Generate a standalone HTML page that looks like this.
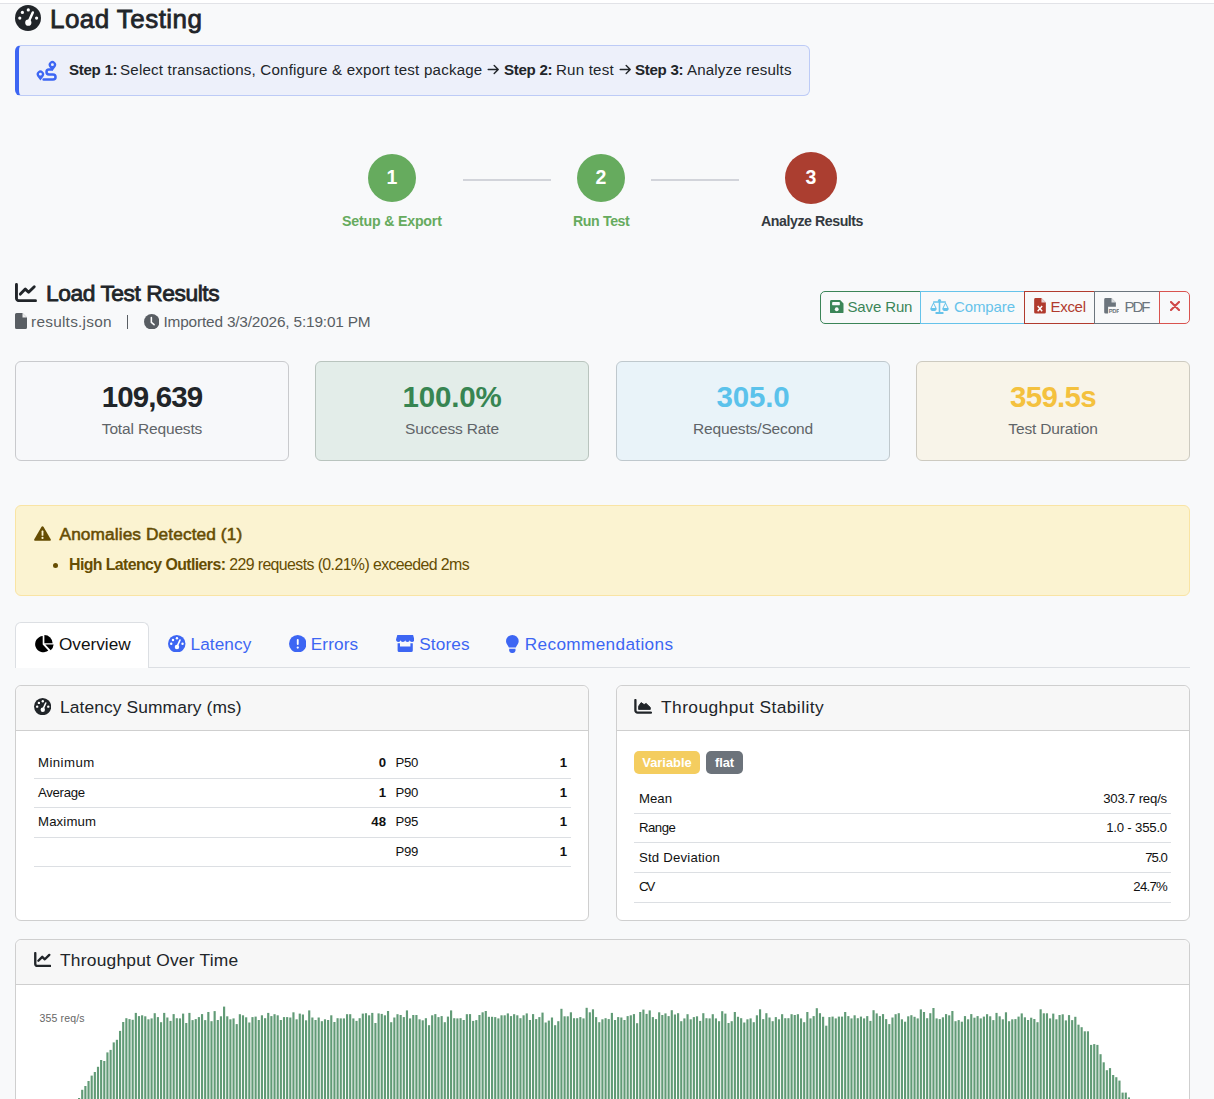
<!DOCTYPE html>
<html><head><meta charset="utf-8">
<style>
*{box-sizing:border-box;margin:0;padding:0}
html,body{width:1214px;height:1099px;overflow:hidden}
body{background:#f8f9fa;font-family:"Liberation Sans",sans-serif;color:#212529;position:relative}
.a{position:absolute}
.t{position:absolute;white-space:nowrap;line-height:1}
.box{position:absolute;border:1px solid #cfd0d3;border-radius:6px}
svg{position:absolute;display:block}
.hdr{position:absolute;left:0;right:0;top:0;height:45px;background:#f7f7f7;border-bottom:1px solid #cfcfcf;border-radius:6px 6px 0 0}
.row{position:absolute;height:1px;background:#dcdfe3}
</style></head><body>
<!-- top strip -->
<div class="a" style="left:0;top:0;width:1214px;height:3px;background:#fff"></div>
<div class="a" style="left:0;top:3px;width:1214px;height:1px;background:#e2e3e7"></div>

<!-- Title -->
<svg style="left:15px;top:5px" width="26" height="26" viewBox="0 0 26 26">
<circle cx="13" cy="13" r="13" fill="#212529"/>
<circle cx="13.3" cy="4.9" r="1.6" fill="#fff"/><circle cx="7.4" cy="7.4" r="1.6" fill="#fff"/>
<circle cx="4.8" cy="13.1" r="1.6" fill="#fff"/><circle cx="21.6" cy="13.1" r="1.6" fill="#fff"/>
<line x1="13.3" y1="17.5" x2="17.8" y2="7.5" stroke="#fff" stroke-width="2.5" stroke-linecap="round"/>
<circle cx="13.3" cy="17.7" r="3.1" fill="#fff"/>
</svg>
<div class="t" style="left:50px;top:6px;font-size:26px;letter-spacing:0.45px;-webkit-text-stroke:0.8px #212529">Load Testing</div>

<!-- banner -->
<div class="a" style="left:15px;top:45px;width:795px;height:51px;background:#edf0fa;border:1px solid #bdcbf6;border-left:4px solid #3d66f3;border-radius:6px"></div>
<svg style="left:36px;top:60px" width="21" height="21" viewBox="0 0 21 21">
<path d="M4.4 20.4 L1.2 16.2 A3.75 3.75 0 1 1 7.6 16.2 Z M4.4 12.7 A1.45 1.45 0 1 0 4.4 15.6 A1.45 1.45 0 1 0 4.4 12.7Z" fill="#3d66f3" fill-rule="evenodd"/>
<path d="M16.4 10.9 L13.2 6.7 A3.75 3.75 0 1 1 19.6 6.7 Z M16.4 3.2 A1.45 1.45 0 1 0 16.4 6.1 A1.45 1.45 0 1 0 16.4 3.2Z" fill="#3d66f3" fill-rule="evenodd"/>
<path d="M15.5 9.6 H12.9 A2.4 2.4 0 0 0 12.9 14.4 H17 A2.55 2.55 0 0 1 17 19.5 H7.6" stroke="#3d66f3" stroke-width="2.5" fill="none" stroke-linecap="round"/>
</svg>
<div class="t" style="left:69px;top:62px;font-size:15.1px;font-weight:700;letter-spacing:-0.3px">Step 1:</div>
<div class="t" style="left:120px;top:62px;font-size:15.1px;letter-spacing:0.21px">Select transactions, Configure &amp; export test package</div>
<svg style="left:487px;top:64px" width="12" height="11" viewBox="0 0 12 11"><path d="M1.2 5.5 H10.8 M7.2 1.4 L11.2 5.5 L7.2 9.6" stroke="#212529" stroke-width="1.4" fill="none" stroke-linecap="round" stroke-linejoin="round"/></svg>
<div class="t" style="left:504px;top:62px;font-size:15.1px;font-weight:700;letter-spacing:-0.3px">Step 2:</div>
<div class="t" style="left:556px;top:62px;font-size:15.1px;letter-spacing:0.2px">Run test</div>
<svg style="left:618.5px;top:64px" width="12" height="11" viewBox="0 0 12 11"><path d="M1.2 5.5 H10.8 M7.2 1.4 L11.2 5.5 L7.2 9.6" stroke="#212529" stroke-width="1.4" fill="none" stroke-linecap="round" stroke-linejoin="round"/></svg>
<div class="t" style="left:635px;top:62px;font-size:15.1px;font-weight:700;letter-spacing:-0.3px">Step 3:</div>
<div class="t" style="left:687px;top:62px;font-size:15.1px;letter-spacing:0.15px">Analyze results</div>

<!-- stepper -->
<div class="a" style="left:368px;top:154px;width:48px;height:48px;border-radius:50%;background:#66ab5e"></div>
<div class="a" style="left:577px;top:154px;width:48px;height:48px;border-radius:50%;background:#66ab5e"></div>
<div class="a" style="left:785px;top:152px;width:52px;height:52px;border-radius:50%;background:#ab3e30"></div>
<div class="t" style="left:368px;width:48px;text-align:center;top:168px;font-size:19.5px;font-weight:700;color:#fff">1</div>
<div class="t" style="left:577px;width:48px;text-align:center;top:168px;font-size:19.5px;font-weight:700;color:#fff">2</div>
<div class="t" style="left:785px;width:52px;text-align:center;top:168px;font-size:19.5px;font-weight:700;color:#fff">3</div>
<div class="a" style="left:463px;top:179px;width:88px;height:2px;background:#d2d4da"></div>
<div class="a" style="left:651px;top:179px;width:88px;height:2px;background:#d2d4da"></div>
<div class="t" style="left:342px;top:214px;font-size:14.2px;font-weight:700;color:#66ab5e;letter-spacing:-0.2px">Setup &amp; Export</div>
<div class="t" style="left:573px;top:214px;font-size:14.2px;font-weight:700;color:#66ab5e;letter-spacing:-0.4px">Run Test</div>
<div class="t" style="left:761px;top:214px;font-size:14.2px;font-weight:700;color:#343a40;letter-spacing:-0.45px">Analyze Results</div>

<!-- results header -->
<svg style="left:15px;top:283px" width="22" height="19" viewBox="0 0 22 19">
<path d="M1.46 1.45 V15.2 A2.5 2.5 0 0 0 3.96 17.7 H20.5" stroke="#212529" stroke-width="2.9" fill="none" stroke-linecap="round"/>
<path d="M5.4 11.1 L10.3 6.1 L13.6 9.2 L19.25 3.7" stroke="#212529" stroke-width="2.9" fill="none" stroke-linejoin="round" stroke-linecap="round"/>
</svg>
<div class="t" style="left:46px;top:282px;font-size:22.8px;letter-spacing:-0.45px;-webkit-text-stroke:0.8px #212529">Load Test Results</div>
<svg style="left:15px;top:313px" width="12" height="16" viewBox="0 0 12 16">
<path d="M1.5 0 H7.5 L12 4.5 V14.5 A1.5 1.5 0 0 1 10.5 16 H1.5 A1.5 1.5 0 0 1 0 14.5 V1.5 A1.5 1.5 0 0 1 1.5 0Z" fill="#595e63"/>
<path d="M7.5 0 V4.5 H12" fill="#fff" opacity="0.9"/>
</svg>
<div class="t" style="left:31px;top:314px;font-size:15.4px;color:#595e63;letter-spacing:0.25px">results.json</div>
<div class="a" style="left:127px;top:315px;width:1.3px;height:14px;background:#595e63"></div>
<svg style="left:143.5px;top:313.5px" width="15.5" height="15.5" viewBox="0 0 16 16">
<circle cx="8" cy="8" r="8" fill="#595e63"/>
<path d="M7.6 3.6 V8.6 L10.4 11" stroke="#fff" stroke-width="1.6" fill="none" stroke-linecap="round"/>
</svg>
<div class="t" style="left:163.5px;top:314px;font-size:15.4px;color:#595e63;letter-spacing:-0.18px">Imported 3/3/2026, 5:19:01 PM</div>

<!-- button group -->
<div class="a" style="left:820px;top:291px;width:101px;height:33px;border:1px solid #3b8558;border-radius:5px 0 0 5px"></div>
<div class="a" style="left:920px;top:291px;width:105px;height:33px;border:1px solid #66c3ea"></div>
<div class="a" style="left:1024px;top:291px;width:71px;height:33px;border:1px solid #b13b2e"></div>
<div class="a" style="left:1094px;top:291px;width:66px;height:33px;border:1px solid #6c757d"></div>
<div class="a" style="left:1159px;top:291px;width:31px;height:33px;border:1px solid #d9534f;border-radius:0 5px 5px 0"></div>
<svg style="left:830px;top:299.5px" width="13.5" height="13.5" viewBox="0 0 14 14">
<path d="M1.5 0 H10.5 L14 3.5 V12.5 A1.5 1.5 0 0 1 12.5 14 H1.5 A1.5 1.5 0 0 1 0 12.5 V1.5 A1.5 1.5 0 0 1 1.5 0Z" fill="#3b8558"/>
<rect x="2.2" y="2" width="8" height="3.4" rx="0.5" fill="#f8f9fa"/>
<circle cx="7" cy="9.6" r="2" fill="#f8f9fa"/>
</svg>
<div class="t" style="left:847.5px;top:299px;font-size:15px;color:#3b8558;letter-spacing:-0.13px">Save Run</div>
<svg style="left:930px;top:299px" width="19" height="15" viewBox="0 0 19 15">
<g fill="#66c3ea">
<rect x="8.7" y="1" width="1.6" height="12"/>
<rect x="5.5" y="13" width="8" height="2" rx="0.6"/>
<rect x="3" y="2.2" width="13" height="1.6" rx="0.8"/>
<circle cx="9.5" cy="1.6" r="1.6"/>
<path d="M0.3 9.5 L3.5 3 L6.7 9.5 A3.2 2.6 0 0 1 0.3 9.5Z M1.6 9 H5.4 L3.5 5Z" fill-rule="evenodd"/>
<path d="M12.3 9.5 L15.5 3 L18.7 9.5 A3.2 2.6 0 0 1 12.3 9.5Z M13.6 9 H17.4 L15.5 5Z" fill-rule="evenodd"/>
</g>
</svg>
<div class="t" style="left:954px;top:299px;font-size:15px;color:#66c3ea;letter-spacing:-0.1px">Compare</div>
<svg style="left:1034px;top:298.3px" width="12" height="15.6" viewBox="0 0 12 16">
<path d="M1.5 0 H7.5 L12 4.5 V14.5 A1.5 1.5 0 0 1 10.5 16 H1.5 A1.5 1.5 0 0 1 0 14.5 V1.5 A1.5 1.5 0 0 1 1.5 0Z" fill="#b13b2e"/>
<path d="M7.5 0 V4.5 H12Z" fill="#f8f9fa" opacity="0.8"/>
<path d="M3.6 8.3 L8.2 13.6 M8.2 8.3 L3.6 13.6" stroke="#fff" stroke-width="1.5"/>
</svg>
<div class="t" style="left:1050.5px;top:299px;font-size:15px;color:#b13b2e;letter-spacing:-0.3px">Excel</div>
<svg style="left:1103.8px;top:298.3px" width="15" height="15.6" viewBox="0 0 15 16">
<path d="M1.5 0 H7.5 L12 4.5 V9 H4 V16 H1.5 A1.5 1.5 0 0 1 0 14.5 V1.5 A1.5 1.5 0 0 1 1.5 0Z" fill="#6c757d"/>
<path d="M7.5 0 V4.5 H12Z" fill="#f8f9fa" opacity="0.8"/>
<text x="4.6" y="15.6" font-family="Liberation Sans" font-weight="700" font-size="6" fill="#6c757d" letter-spacing="-0.3">PDF</text>
</svg>
<div class="t" style="left:1124.5px;top:299px;font-size:15px;color:#6c757d;letter-spacing:-2.1px">PDF</div>
<svg style="left:1169.5px;top:301.3px" width="10" height="10" viewBox="0 0 10 10">
<path d="M1 1 L9 9 M9 1 L1 9" stroke="#d04848" stroke-width="2.1" stroke-linecap="round"/>
</svg>

<!-- stat cards -->
<div class="box" style="left:15px;top:361px;width:274px;height:100px;background:#f7f8fa;border-color:#c9cacd"></div>
<div class="box" style="left:315px;top:361px;width:274px;height:100px;background:#e3ede9;border-color:#b9c4be"></div>
<div class="box" style="left:616px;top:361px;width:274px;height:100px;background:#e9f3f9;border-color:#bfc8cd"></div>
<div class="box" style="left:916px;top:361px;width:274px;height:100px;background:#f8f4e9;border-color:#cdcac0"></div>
<div class="t" style="left:15px;width:274px;text-align:center;top:382px;font-size:29.5px;font-weight:700;letter-spacing:-0.9px;color:#212529">109,639</div>
<div class="t" style="left:315px;width:274px;text-align:center;top:382px;font-size:29.5px;font-weight:700;letter-spacing:-0.2px;color:#378552">100.0%</div>
<div class="t" style="left:616px;width:274px;text-align:center;top:382px;font-size:29.5px;font-weight:700;letter-spacing:-0.2px;color:#5bc2eb">305.0</div>
<div class="t" style="left:916px;width:274px;text-align:center;top:382px;font-size:29.5px;font-weight:700;letter-spacing:-0.7px;color:#f4c13e">359.5s</div>
<div class="t" style="left:15px;width:274px;text-align:center;top:421px;font-size:15.5px;color:#5f6468;letter-spacing:-0.15px">Total Requests</div>
<div class="t" style="left:315px;width:274px;text-align:center;top:421px;font-size:15.5px;color:#5f6468;letter-spacing:-0.15px">Success Rate</div>
<div class="t" style="left:616px;width:274px;text-align:center;top:421px;font-size:15.5px;color:#5f6468;letter-spacing:-0.15px">Requests/Second</div>
<div class="t" style="left:916px;width:274px;text-align:center;top:421px;font-size:15.5px;color:#5f6468;letter-spacing:-0.15px">Test Duration</div>

<!-- alert -->
<div class="a" style="left:15px;top:505px;width:1175px;height:91px;background:#fbf3d1;border:1px solid #f9e4a4;border-radius:6px"></div>
<svg style="left:34px;top:526px" width="17" height="15" viewBox="0 0 17 15">
<path d="M8.5 0.3 C9 0.3 9.3 0.5 9.6 1 L16.7 13.2 C17.1 14 16.7 14.8 15.8 14.8 H1.2 C0.3 14.8 -0.1 14 0.3 13.2 L7.4 1 C7.7 0.5 8 0.3 8.5 0.3Z" fill="#664d03"/>
<rect x="7.6" y="4.6" width="1.8" height="5.2" rx="0.6" fill="#fbf3d1"/>
<circle cx="8.5" cy="11.9" r="1.1" fill="#fbf3d1"/>
</svg>
<div class="t" style="left:59.5px;top:526px;font-size:17.3px;color:#664d03;letter-spacing:0.1px;-webkit-text-stroke:0.55px #664d03">Anomalies Detected (1)</div>
<div class="a" style="left:53px;top:563px;width:5px;height:5px;border-radius:50%;background:#664d03"></div>
<div class="t" style="left:69px;top:557px;font-size:15.9px;color:#664d03;letter-spacing:-0.6px"><b>High Latency Outliers:</b> 229 requests (0.21%) exceeded 2ms</div>

<!-- tabs -->
<div class="a" style="left:15px;top:667px;width:1175px;height:1px;background:#dcdfe3"></div>
<div class="a" style="left:15px;top:622px;width:134px;height:46px;background:#fff;border:1px solid #dcdfe3;border-bottom:none;border-radius:6px 6px 0 0"></div>
<svg style="left:34.6px;top:634.6px" width="19" height="18" viewBox="0 0 19 18">
<path d="M7.7 1.1 V9.6 L13.3 15.5 A8.1 8.1 0 1 1 7.7 1.1Z" fill="#000"/>
<path d="M9.35 0.1 V8.3 H17.6 A8.25 8.25 0 0 0 9.35 0.1Z" fill="#000"/>
<path d="M10.3 9.4 H18.6 A8.4 8.4 0 0 1 15.7 15.3Z" fill="#000"/>
</svg>
<div class="t" style="left:59px;top:636px;font-size:17.2px;color:#111;letter-spacing:0px">Overview</div>
<svg style="left:168px;top:634.6px" width="17.5" height="17.5" viewBox="0 0 26 26">
<circle cx="13" cy="13" r="13" fill="#3d66f3"/>
<circle cx="13.3" cy="4.9" r="1.8" fill="#fff"/><circle cx="7.4" cy="7.4" r="1.8" fill="#fff"/>
<circle cx="4.8" cy="13.1" r="1.8" fill="#fff"/><circle cx="21.6" cy="13.1" r="1.8" fill="#fff"/>
<line x1="13.3" y1="17.5" x2="17.8" y2="7.5" stroke="#fff" stroke-width="2.4" stroke-linecap="round"/>
<circle cx="13.3" cy="17.7" r="3.3" fill="#fff"/>
</svg>
<div class="t" style="left:190.5px;top:636px;font-size:17.2px;color:#3d66f3;letter-spacing:0.1px">Latency</div>
<svg style="left:288.8px;top:634.6px" width="17.5" height="17.5" viewBox="0 0 18 18">
<circle cx="9" cy="9" r="9" fill="#3d66f3"/>
<rect x="8.05" y="4.2" width="1.9" height="6" rx="0.9" fill="#fff"/>
<circle cx="9" cy="12.9" r="1.15" fill="#fff"/>
</svg>
<div class="t" style="left:310.8px;top:636px;font-size:17.2px;color:#3d66f3;letter-spacing:0.1px">Errors</div>
<svg style="left:395.6px;top:635px" width="18.4" height="17" viewBox="0 0 18.4 17">
<path d="M1.3 0 H17.1 L18.4 4.5 C18.4 6 17.3 7 16 7 C14.7 7 13.8 6 13.8 5 C13.8 6 12.6 7 11.5 7 C10.3 7 9.2 6 9.2 5 C9.2 6 8 7 6.9 7 C5.7 7 4.6 6 4.6 5 C4.6 6 3.5 7 2.3 7 C1 7 0 6 0 4.5Z" fill="#3d66f3"/>
<path d="M1.6 8.2 H4 V11.5 H14.4 V8.2 H16.8 V15.4 A1.6 1.6 0 0 1 15.2 17 H3.2 A1.6 1.6 0 0 1 1.6 15.4Z" fill="#3d66f3"/>
</svg>
<div class="t" style="left:419.3px;top:636px;font-size:17.2px;color:#3d66f3;letter-spacing:0.1px">Stores</div>
<svg style="left:506.3px;top:634.6px" width="12.7" height="18" viewBox="0 0 12.7 18">
<path d="M6.35 0 A6.35 6.35 0 0 1 12.7 6.35 C12.7 9 10.6 10.5 9.8 12.6 H2.9 C2.1 10.5 0 9 0 6.35 A6.35 6.35 0 0 1 6.35 0Z" fill="#3d66f3"/>
<path d="M3.2 13.8 H9.5 V15.3 C9.5 16.8 8.3 18 6.8 18 H5.9 C4.4 18 3.2 16.8 3.2 15.3Z" fill="#3d66f3"/>
</svg>
<div class="t" style="left:524.8px;top:636px;font-size:17.2px;color:#3d66f3;letter-spacing:0.35px">Recommendations</div>

<!-- latency summary card -->
<div class="box" style="left:15px;top:685px;width:574px;height:236px;background:#fff;border-color:#cfcfcf;overflow:hidden">
  <div class="hdr"></div>
</div>
<svg style="left:34px;top:698px" width="17.2" height="17.2" viewBox="0 0 26 26">
<circle cx="13" cy="13" r="13" fill="#212529"/>
<circle cx="13.3" cy="4.9" r="1.8" fill="#fff"/><circle cx="7.4" cy="7.4" r="1.8" fill="#fff"/>
<circle cx="4.8" cy="13.1" r="1.8" fill="#fff"/><circle cx="21.6" cy="13.1" r="1.8" fill="#fff"/>
<line x1="13.3" y1="17.5" x2="17.8" y2="7.5" stroke="#fff" stroke-width="2.4" stroke-linecap="round"/>
<circle cx="13.3" cy="17.7" r="3.3" fill="#fff"/>
</svg>
<div class="t" style="left:60px;top:699px;font-size:17.4px;color:#212529;letter-spacing:0.1px">Latency Summary (ms)</div>

<div class="row" style="left:34px;top:778px;width:537px"></div>
<div class="row" style="left:34px;top:807px;width:537px"></div>
<div class="row" style="left:34px;top:837px;width:537px"></div>
<div class="row" style="left:34px;top:866px;width:537px"></div>
<div class="t" style="left:38px;top:756px;font-size:13.2px;color:#111;letter-spacing:0.45px">Minimum</div>
<div class="t" style="left:38px;top:786px;font-size:13.2px;color:#111;letter-spacing:-0.3px">Average</div>
<div class="t" style="left:38px;top:815px;font-size:13.2px;color:#111;letter-spacing:0.15px">Maximum</div>
<div class="t" style="left:286px;width:100px;text-align:right;top:756px;font-size:13.2px;font-weight:700;color:#111">0</div>
<div class="t" style="left:286px;width:100px;text-align:right;top:786px;font-size:13.2px;font-weight:700;color:#111">1</div>
<div class="t" style="left:286px;width:100px;text-align:right;top:815px;font-size:13.2px;font-weight:700;color:#111">48</div>
<div class="t" style="left:395.5px;top:756px;font-size:13.2px;color:#111;letter-spacing:-0.3px">P50</div>
<div class="t" style="left:395.5px;top:786px;font-size:13.2px;color:#111;letter-spacing:-0.3px">P90</div>
<div class="t" style="left:395.5px;top:815px;font-size:13.2px;color:#111;letter-spacing:-0.3px">P95</div>
<div class="t" style="left:395.5px;top:845px;font-size:13.2px;color:#111;letter-spacing:-0.3px">P99</div>
<div class="t" style="left:467px;width:100px;text-align:right;top:756px;font-size:13.2px;font-weight:700;color:#111">1</div>
<div class="t" style="left:467px;width:100px;text-align:right;top:786px;font-size:13.2px;font-weight:700;color:#111">1</div>
<div class="t" style="left:467px;width:100px;text-align:right;top:815px;font-size:13.2px;font-weight:700;color:#111">1</div>
<div class="t" style="left:467px;width:100px;text-align:right;top:845px;font-size:13.2px;font-weight:700;color:#111">1</div>

<!-- stability card -->
<div class="box" style="left:616px;top:685px;width:574px;height:236px;background:#fff;border-color:#cfcfcf;overflow:hidden">
  <div class="hdr"></div>
</div>
<svg style="left:634px;top:699px" width="18" height="15" viewBox="0 0 18 15">
<path d="M1.4 1.1 V11.4 A2.2 2.2 0 0 0 3.6 13.6 H17" stroke="#212529" stroke-width="2.3" fill="none" stroke-linecap="round"/>
<path d="M4.6 10.4 V7.2 L7.1 3.6 L10.1 5.6 L12.1 4.4 L16.3 8.4 V10.4 Z" fill="#212529" stroke="#212529" stroke-width="0.9" stroke-linejoin="round"/>
</svg>
<div class="t" style="left:661px;top:699px;font-size:17.4px;color:#212529;letter-spacing:0.42px">Throughput Stability</div>
<div class="a" style="left:634px;top:751px;width:66px;height:23px;border-radius:5px;background:#f4cd5f"></div>
<div class="a" style="left:706px;top:751px;width:37px;height:23px;border-radius:5px;background:#6c737b"></div>
<div class="t" style="left:634px;width:66px;text-align:center;top:757px;font-size:12.9px;font-weight:700;color:#fff;letter-spacing:0px">Variable</div>
<div class="t" style="left:706px;width:37px;text-align:center;top:757px;font-size:12.9px;font-weight:700;color:#fff;letter-spacing:-0.1px">flat</div>
<div class="row" style="left:634px;top:813px;width:537px"></div>
<div class="row" style="left:634px;top:842px;width:537px"></div>
<div class="row" style="left:634px;top:872px;width:537px"></div>
<div class="row" style="left:634px;top:902px;width:537px"></div>
<div class="t" style="left:639px;top:792px;font-size:13.2px;color:#111">Mean</div>
<div class="t" style="left:639px;top:821px;font-size:13.2px;color:#111;letter-spacing:-0.5px">Range</div>
<div class="t" style="left:639px;top:851px;font-size:13.2px;color:#111;letter-spacing:0.2px">Std Deviation</div>
<div class="t" style="left:639px;top:880px;font-size:13.2px;color:#111;letter-spacing:-2px">CV</div>
<div class="t" style="left:967px;width:200px;text-align:right;top:792px;font-size:13.2px;color:#111;letter-spacing:-0.2px">303.7 req/s</div>
<div class="t" style="left:967px;width:200px;text-align:right;top:821px;font-size:13.2px;color:#111;letter-spacing:-0.2px">1.0 - 355.0</div>
<div class="t" style="left:967px;width:200px;text-align:right;top:851px;font-size:13.2px;color:#111;letter-spacing:-0.95px">75.0</div>
<div class="t" style="left:967px;width:200px;text-align:right;top:880px;font-size:13.2px;color:#111;letter-spacing:-0.75px">24.7%</div>

<!-- throughput over time -->
<div class="box" style="left:15px;top:939px;width:1175px;height:300px;background:#fff;border-color:#cfcfcf;overflow:hidden">
  <div class="hdr"></div>
</div>
<svg style="left:33.6px;top:952px" width="17.6" height="15" viewBox="0 0 22 19">
<path d="M1.46 1.45 V15.2 A2.5 2.5 0 0 0 3.96 17.7 H20.5" stroke="#212529" stroke-width="3.0" fill="none" stroke-linecap="round"/>
<path d="M5.4 11.1 L10.3 6.1 L13.6 9.2 L19.25 3.7" stroke="#212529" stroke-width="3.0" fill="none" stroke-linejoin="round" stroke-linecap="round"/>
</svg>
<div class="t" style="left:60px;top:952px;font-size:17.4px;color:#212529;letter-spacing:0.22px">Throughput Over Time</div>
<div class="t" style="left:39.5px;top:1013px;font-size:10.5px;color:#666;letter-spacing:0.15px">355 req/s</div>
<svg id="bars" style="left:0;top:0" width="1214" height="1099" viewBox="0 0 1214 1099"><g fill="#619b76"><rect x="78.00" y="1098.0" width="2.153" height="12.0"/><rect x="81.15" y="1089.8" width="2.153" height="20.2"/><rect x="84.31" y="1086.0" width="2.153" height="24.0"/><rect x="87.46" y="1081.0" width="2.153" height="29.0"/><rect x="90.61" y="1075.6" width="2.153" height="34.4"/><rect x="93.76" y="1072.0" width="2.153" height="38.0"/><rect x="96.92" y="1066.8" width="2.153" height="43.2"/><rect x="100.07" y="1060.0" width="2.153" height="50.0"/><rect x="103.22" y="1061.0" width="2.153" height="49.0"/><rect x="106.37" y="1052.4" width="2.153" height="57.6"/><rect x="109.53" y="1049.9" width="2.153" height="60.1"/><rect x="112.68" y="1042.4" width="2.153" height="67.6"/><rect x="115.83" y="1039.8" width="2.153" height="70.2"/><rect x="118.99" y="1030.9" width="2.153" height="79.1"/><rect x="122.14" y="1022.0" width="2.153" height="88.0"/><rect x="125.29" y="1018.2" width="2.153" height="91.8"/><rect x="128.44" y="1019.1" width="2.153" height="90.9"/><rect x="131.60" y="1019.8" width="2.153" height="90.2"/><rect x="134.75" y="1012.9" width="2.153" height="97.1"/><rect x="137.90" y="1016.1" width="2.153" height="93.9"/><rect x="141.05" y="1015.3" width="2.153" height="94.7"/><rect x="144.21" y="1016.3" width="2.153" height="93.7"/><rect x="147.36" y="1019.3" width="2.153" height="90.7"/><rect x="150.51" y="1018.4" width="2.153" height="91.6"/><rect x="153.66" y="1013.2" width="2.153" height="96.8"/><rect x="156.82" y="1017.1" width="2.153" height="92.9"/><rect x="159.97" y="1022.2" width="2.153" height="87.8"/><rect x="163.12" y="1012.9" width="2.153" height="97.1"/><rect x="166.28" y="1017.5" width="2.153" height="92.5"/><rect x="169.43" y="1020.9" width="2.153" height="89.1"/><rect x="172.58" y="1014.1" width="2.153" height="95.9"/><rect x="175.73" y="1018.2" width="2.153" height="91.8"/><rect x="178.89" y="1018.4" width="2.153" height="91.6"/><rect x="182.04" y="1013.6" width="2.153" height="96.4"/><rect x="185.19" y="1023.0" width="2.153" height="87.0"/><rect x="188.34" y="1012.9" width="2.153" height="97.1"/><rect x="191.50" y="1020.1" width="2.153" height="89.9"/><rect x="194.65" y="1019.1" width="2.153" height="90.9"/><rect x="197.80" y="1017.1" width="2.153" height="92.9"/><rect x="200.96" y="1014.1" width="2.153" height="95.9"/><rect x="204.11" y="1020.1" width="2.153" height="89.9"/><rect x="207.26" y="1012.0" width="2.153" height="98.0"/><rect x="210.41" y="1021.2" width="2.153" height="88.8"/><rect x="213.57" y="1011.1" width="2.153" height="98.9"/><rect x="216.72" y="1020.0" width="2.153" height="90.0"/><rect x="219.87" y="1016.3" width="2.153" height="93.7"/><rect x="223.02" y="1006.6" width="2.153" height="103.4"/><rect x="226.18" y="1016.3" width="2.153" height="93.7"/><rect x="229.33" y="1019.3" width="2.153" height="90.7"/><rect x="232.48" y="1018.4" width="2.153" height="91.6"/><rect x="235.63" y="1024.1" width="2.153" height="85.9"/><rect x="238.79" y="1014.2" width="2.153" height="95.8"/><rect x="241.94" y="1015.3" width="2.153" height="94.7"/><rect x="245.09" y="1017.3" width="2.153" height="92.7"/><rect x="248.25" y="1022.5" width="2.153" height="87.5"/><rect x="251.40" y="1017.1" width="2.153" height="92.9"/><rect x="254.55" y="1016.6" width="2.153" height="93.4"/><rect x="257.70" y="1020.0" width="2.153" height="90.0"/><rect x="260.86" y="1015.3" width="2.153" height="94.7"/><rect x="264.01" y="1018.2" width="2.153" height="91.8"/><rect x="267.16" y="1012.9" width="2.153" height="97.1"/><rect x="270.31" y="1016.1" width="2.153" height="93.9"/><rect x="273.47" y="1014.2" width="2.153" height="95.8"/><rect x="276.62" y="1015.3" width="2.153" height="94.7"/><rect x="279.77" y="1020.0" width="2.153" height="90.0"/><rect x="282.93" y="1017.1" width="2.153" height="92.9"/><rect x="286.08" y="1017.1" width="2.153" height="92.9"/><rect x="289.23" y="1017.5" width="2.153" height="92.5"/><rect x="292.38" y="1012.3" width="2.153" height="97.7"/><rect x="295.54" y="1019.3" width="2.153" height="90.7"/><rect x="298.69" y="1013.6" width="2.153" height="96.4"/><rect x="301.84" y="1014.5" width="2.153" height="95.5"/><rect x="304.99" y="1020.3" width="2.153" height="89.7"/><rect x="308.15" y="1010.4" width="2.153" height="99.6"/><rect x="311.30" y="1017.5" width="2.153" height="92.5"/><rect x="314.45" y="1020.0" width="2.153" height="90.0"/><rect x="317.61" y="1017.5" width="2.153" height="92.5"/><rect x="320.76" y="1021.2" width="2.153" height="88.8"/><rect x="323.91" y="1019.3" width="2.153" height="90.7"/><rect x="327.06" y="1020.0" width="2.153" height="90.0"/><rect x="330.22" y="1015.3" width="2.153" height="94.7"/><rect x="333.37" y="1022.0" width="2.153" height="88.0"/><rect x="336.52" y="1018.2" width="2.153" height="91.8"/><rect x="339.67" y="1018.4" width="2.153" height="91.6"/><rect x="342.83" y="1018.4" width="2.153" height="91.6"/><rect x="345.98" y="1014.2" width="2.153" height="95.8"/><rect x="349.13" y="1014.2" width="2.153" height="95.8"/><rect x="352.28" y="1018.4" width="2.153" height="91.6"/><rect x="355.44" y="1020.9" width="2.153" height="89.1"/><rect x="358.59" y="1018.2" width="2.153" height="91.8"/><rect x="361.74" y="1013.6" width="2.153" height="96.4"/><rect x="364.90" y="1013.2" width="2.153" height="96.8"/><rect x="368.05" y="1015.3" width="2.153" height="94.7"/><rect x="371.20" y="1012.9" width="2.153" height="97.1"/><rect x="374.35" y="1023.0" width="2.153" height="87.0"/><rect x="377.51" y="1013.4" width="2.153" height="96.6"/><rect x="380.66" y="1013.9" width="2.153" height="96.1"/><rect x="383.81" y="1015.3" width="2.153" height="94.7"/><rect x="386.96" y="1011.0" width="2.153" height="99.0"/><rect x="390.12" y="1022.2" width="2.153" height="87.8"/><rect x="393.27" y="1017.5" width="2.153" height="92.5"/><rect x="396.42" y="1014.2" width="2.153" height="95.8"/><rect x="399.58" y="1015.0" width="2.153" height="95.0"/><rect x="402.73" y="1017.1" width="2.153" height="92.9"/><rect x="405.88" y="1010.4" width="2.153" height="99.6"/><rect x="409.03" y="1018.4" width="2.153" height="91.6"/><rect x="412.19" y="1015.0" width="2.153" height="95.0"/><rect x="415.34" y="1015.0" width="2.153" height="95.0"/><rect x="418.49" y="1019.3" width="2.153" height="90.7"/><rect x="421.64" y="1020.3" width="2.153" height="89.7"/><rect x="424.80" y="1018.2" width="2.153" height="91.8"/><rect x="427.95" y="1025.2" width="2.153" height="84.8"/><rect x="431.10" y="1015.3" width="2.153" height="94.7"/><rect x="434.26" y="1014.1" width="2.153" height="95.9"/><rect x="437.41" y="1017.1" width="2.153" height="92.9"/><rect x="440.56" y="1016.1" width="2.153" height="93.9"/><rect x="443.71" y="1022.2" width="2.153" height="87.8"/><rect x="446.87" y="1016.6" width="2.153" height="93.4"/><rect x="450.02" y="1010.4" width="2.153" height="99.6"/><rect x="453.17" y="1018.2" width="2.153" height="91.8"/><rect x="456.32" y="1018.4" width="2.153" height="91.6"/><rect x="459.48" y="1018.2" width="2.153" height="91.8"/><rect x="462.63" y="1020.0" width="2.153" height="90.0"/><rect x="465.78" y="1014.2" width="2.153" height="95.8"/><rect x="468.93" y="1014.1" width="2.153" height="95.9"/><rect x="472.09" y="1020.9" width="2.153" height="89.1"/><rect x="475.24" y="1020.1" width="2.153" height="89.9"/><rect x="478.39" y="1015.0" width="2.153" height="95.0"/><rect x="481.55" y="1012.3" width="2.153" height="97.7"/><rect x="484.70" y="1011.0" width="2.153" height="99.0"/><rect x="487.85" y="1016.8" width="2.153" height="93.2"/><rect x="491.00" y="1016.8" width="2.153" height="93.2"/><rect x="494.16" y="1017.1" width="2.153" height="92.9"/><rect x="497.31" y="1018.4" width="2.153" height="91.6"/><rect x="500.46" y="1015.3" width="2.153" height="94.7"/><rect x="503.61" y="1015.3" width="2.153" height="94.7"/><rect x="506.77" y="1013.4" width="2.153" height="96.6"/><rect x="509.92" y="1016.1" width="2.153" height="93.9"/><rect x="513.07" y="1014.2" width="2.153" height="95.8"/><rect x="516.23" y="1015.3" width="2.153" height="94.7"/><rect x="519.38" y="1018.2" width="2.153" height="91.8"/><rect x="522.53" y="1015.3" width="2.153" height="94.7"/><rect x="525.68" y="1013.4" width="2.153" height="96.6"/><rect x="528.84" y="1020.0" width="2.153" height="90.0"/><rect x="531.99" y="1014.1" width="2.153" height="95.9"/><rect x="535.14" y="1019.1" width="2.153" height="90.9"/><rect x="538.29" y="1017.1" width="2.153" height="92.9"/><rect x="541.45" y="1012.6" width="2.153" height="97.4"/><rect x="544.60" y="1022.5" width="2.153" height="87.5"/><rect x="547.75" y="1020.6" width="2.153" height="89.4"/><rect x="550.90" y="1017.5" width="2.153" height="92.5"/><rect x="554.06" y="1025.2" width="2.153" height="84.8"/><rect x="557.21" y="1021.2" width="2.153" height="88.8"/><rect x="560.36" y="1008.8" width="2.153" height="101.2"/><rect x="563.52" y="1016.3" width="2.153" height="93.7"/><rect x="566.67" y="1016.3" width="2.153" height="93.7"/><rect x="569.82" y="1012.3" width="2.153" height="97.7"/><rect x="572.97" y="1018.2" width="2.153" height="91.8"/><rect x="576.13" y="1018.2" width="2.153" height="91.8"/><rect x="579.28" y="1017.1" width="2.153" height="92.9"/><rect x="582.43" y="1018.4" width="2.153" height="91.6"/><rect x="585.58" y="1007.8" width="2.153" height="102.2"/><rect x="588.74" y="1012.3" width="2.153" height="97.7"/><rect x="591.89" y="1009.3" width="2.153" height="100.7"/><rect x="595.04" y="1017.1" width="2.153" height="92.9"/><rect x="598.20" y="1022.2" width="2.153" height="87.8"/><rect x="601.35" y="1019.3" width="2.153" height="90.7"/><rect x="604.50" y="1018.2" width="2.153" height="91.8"/><rect x="607.65" y="1019.1" width="2.153" height="90.9"/><rect x="610.81" y="1012.9" width="2.153" height="97.1"/><rect x="613.96" y="1020.0" width="2.153" height="90.0"/><rect x="617.11" y="1017.1" width="2.153" height="92.9"/><rect x="620.26" y="1017.5" width="2.153" height="92.5"/><rect x="623.42" y="1020.0" width="2.153" height="90.0"/><rect x="626.57" y="1016.1" width="2.153" height="93.9"/><rect x="629.72" y="1015.3" width="2.153" height="94.7"/><rect x="632.88" y="1014.1" width="2.153" height="95.9"/><rect x="636.03" y="1023.2" width="2.153" height="86.8"/><rect x="639.18" y="1012.0" width="2.153" height="98.0"/><rect x="642.33" y="1009.6" width="2.153" height="100.4"/><rect x="645.49" y="1013.9" width="2.153" height="96.1"/><rect x="648.64" y="1010.4" width="2.153" height="99.6"/><rect x="651.79" y="1017.1" width="2.153" height="92.9"/><rect x="654.94" y="1019.1" width="2.153" height="90.9"/><rect x="658.10" y="1012.3" width="2.153" height="97.7"/><rect x="661.25" y="1015.0" width="2.153" height="95.0"/><rect x="664.40" y="1013.4" width="2.153" height="96.6"/><rect x="667.55" y="1016.1" width="2.153" height="93.9"/><rect x="670.71" y="1010.2" width="2.153" height="99.8"/><rect x="673.86" y="1014.5" width="2.153" height="95.5"/><rect x="677.01" y="1013.2" width="2.153" height="96.8"/><rect x="680.17" y="1021.2" width="2.153" height="88.8"/><rect x="683.32" y="1018.4" width="2.153" height="91.6"/><rect x="686.47" y="1014.2" width="2.153" height="95.8"/><rect x="689.62" y="1019.3" width="2.153" height="90.7"/><rect x="692.78" y="1017.1" width="2.153" height="92.9"/><rect x="695.93" y="1016.3" width="2.153" height="93.7"/><rect x="699.08" y="1020.9" width="2.153" height="89.1"/><rect x="702.23" y="1013.2" width="2.153" height="96.8"/><rect x="705.39" y="1018.2" width="2.153" height="91.8"/><rect x="708.54" y="1018.4" width="2.153" height="91.6"/><rect x="711.69" y="1014.2" width="2.153" height="95.8"/><rect x="714.85" y="1018.4" width="2.153" height="91.6"/><rect x="718.00" y="1021.2" width="2.153" height="88.8"/><rect x="721.15" y="1011.2" width="2.153" height="98.8"/><rect x="724.30" y="1013.6" width="2.153" height="96.4"/><rect x="727.46" y="1023.0" width="2.153" height="87.0"/><rect x="730.61" y="1021.2" width="2.153" height="88.8"/><rect x="733.76" y="1012.0" width="2.153" height="98.0"/><rect x="736.91" y="1016.8" width="2.153" height="93.2"/><rect x="740.07" y="1018.2" width="2.153" height="91.8"/><rect x="743.22" y="1022.5" width="2.153" height="87.5"/><rect x="746.37" y="1019.3" width="2.153" height="90.7"/><rect x="749.53" y="1018.4" width="2.153" height="91.6"/><rect x="752.68" y="1022.2" width="2.153" height="87.8"/><rect x="755.83" y="1015.3" width="2.153" height="94.7"/><rect x="758.98" y="1009.3" width="2.153" height="100.7"/><rect x="762.14" y="1019.1" width="2.153" height="90.9"/><rect x="765.29" y="1013.2" width="2.153" height="96.8"/><rect x="768.44" y="1017.5" width="2.153" height="92.5"/><rect x="771.59" y="1021.2" width="2.153" height="88.8"/><rect x="774.75" y="1017.1" width="2.153" height="92.9"/><rect x="777.90" y="1019.3" width="2.153" height="90.7"/><rect x="781.05" y="1014.2" width="2.153" height="95.8"/><rect x="784.20" y="1018.2" width="2.153" height="91.8"/><rect x="787.36" y="1018.2" width="2.153" height="91.8"/><rect x="790.51" y="1014.2" width="2.153" height="95.8"/><rect x="793.66" y="1015.0" width="2.153" height="95.0"/><rect x="796.82" y="1014.2" width="2.153" height="95.8"/><rect x="799.97" y="1018.4" width="2.153" height="91.6"/><rect x="803.12" y="1022.2" width="2.153" height="87.8"/><rect x="806.27" y="1012.0" width="2.153" height="98.0"/><rect x="809.43" y="1018.4" width="2.153" height="91.6"/><rect x="812.58" y="1016.1" width="2.153" height="93.9"/><rect x="815.73" y="1008.2" width="2.153" height="101.8"/><rect x="818.88" y="1013.2" width="2.153" height="96.8"/><rect x="822.04" y="1016.8" width="2.153" height="93.2"/><rect x="825.19" y="1025.7" width="2.153" height="84.3"/><rect x="828.34" y="1017.1" width="2.153" height="92.9"/><rect x="831.50" y="1016.6" width="2.153" height="93.4"/><rect x="834.65" y="1018.4" width="2.153" height="91.6"/><rect x="837.80" y="1016.6" width="2.153" height="93.4"/><rect x="840.95" y="1016.6" width="2.153" height="93.4"/><rect x="844.11" y="1012.0" width="2.153" height="98.0"/><rect x="847.26" y="1016.1" width="2.153" height="93.9"/><rect x="850.41" y="1018.4" width="2.153" height="91.6"/><rect x="853.56" y="1015.3" width="2.153" height="94.7"/><rect x="856.72" y="1018.2" width="2.153" height="91.8"/><rect x="859.87" y="1016.6" width="2.153" height="93.4"/><rect x="863.02" y="1018.4" width="2.153" height="91.6"/><rect x="866.17" y="1016.1" width="2.153" height="93.9"/><rect x="869.33" y="1020.9" width="2.153" height="89.1"/><rect x="872.48" y="1010.2" width="2.153" height="99.8"/><rect x="875.63" y="1013.4" width="2.153" height="96.6"/><rect x="878.79" y="1016.1" width="2.153" height="93.9"/><rect x="881.94" y="1014.1" width="2.153" height="95.9"/><rect x="885.09" y="1019.1" width="2.153" height="90.9"/><rect x="888.24" y="1024.1" width="2.153" height="85.9"/><rect x="891.40" y="1017.5" width="2.153" height="92.5"/><rect x="894.55" y="1014.2" width="2.153" height="95.8"/><rect x="897.70" y="1013.2" width="2.153" height="96.8"/><rect x="900.85" y="1019.3" width="2.153" height="90.7"/><rect x="904.01" y="1021.7" width="2.153" height="88.3"/><rect x="907.16" y="1016.3" width="2.153" height="93.7"/><rect x="910.31" y="1015.2" width="2.153" height="94.8"/><rect x="913.47" y="1016.8" width="2.153" height="93.2"/><rect x="916.62" y="1018.4" width="2.153" height="91.6"/><rect x="919.77" y="1009.4" width="2.153" height="100.6"/><rect x="922.92" y="1012.0" width="2.153" height="98.0"/><rect x="926.08" y="1018.2" width="2.153" height="91.8"/><rect x="929.23" y="1013.2" width="2.153" height="96.8"/><rect x="932.38" y="1008.0" width="2.153" height="102.0"/><rect x="935.53" y="1018.4" width="2.153" height="91.6"/><rect x="938.69" y="1019.1" width="2.153" height="90.9"/><rect x="941.84" y="1017.3" width="2.153" height="92.7"/><rect x="944.99" y="1014.1" width="2.153" height="95.9"/><rect x="948.15" y="1015.3" width="2.153" height="94.7"/><rect x="951.30" y="1011.0" width="2.153" height="99.0"/><rect x="954.45" y="1021.2" width="2.153" height="88.8"/><rect x="957.60" y="1020.1" width="2.153" height="89.9"/><rect x="960.76" y="1021.7" width="2.153" height="88.3"/><rect x="963.91" y="1016.1" width="2.153" height="93.9"/><rect x="967.06" y="1019.3" width="2.153" height="90.7"/><rect x="970.21" y="1014.1" width="2.153" height="95.9"/><rect x="973.37" y="1017.7" width="2.153" height="92.3"/><rect x="976.52" y="1016.1" width="2.153" height="93.9"/><rect x="979.67" y="1018.4" width="2.153" height="91.6"/><rect x="982.82" y="1016.6" width="2.153" height="93.4"/><rect x="985.98" y="1014.2" width="2.153" height="95.8"/><rect x="989.13" y="1016.3" width="2.153" height="93.7"/><rect x="992.28" y="1020.1" width="2.153" height="89.9"/><rect x="995.44" y="1012.9" width="2.153" height="97.1"/><rect x="998.59" y="1016.3" width="2.153" height="93.7"/><rect x="1001.74" y="1019.3" width="2.153" height="90.7"/><rect x="1004.89" y="1012.3" width="2.153" height="97.7"/><rect x="1008.05" y="1021.2" width="2.153" height="88.8"/><rect x="1011.20" y="1019.3" width="2.153" height="90.7"/><rect x="1014.35" y="1019.1" width="2.153" height="90.9"/><rect x="1017.50" y="1016.6" width="2.153" height="93.4"/><rect x="1020.66" y="1013.4" width="2.153" height="96.6"/><rect x="1023.81" y="1017.3" width="2.153" height="92.7"/><rect x="1026.96" y="1020.0" width="2.153" height="90.0"/><rect x="1030.12" y="1017.7" width="2.153" height="92.3"/><rect x="1033.27" y="1019.0" width="2.153" height="91.0"/><rect x="1036.42" y="1022.2" width="2.153" height="87.8"/><rect x="1039.57" y="1009.3" width="2.153" height="100.7"/><rect x="1042.73" y="1013.3" width="2.153" height="96.7"/><rect x="1045.88" y="1013.3" width="2.153" height="96.7"/><rect x="1049.03" y="1018.4" width="2.153" height="91.6"/><rect x="1052.18" y="1013.6" width="2.153" height="96.4"/><rect x="1055.34" y="1019.3" width="2.153" height="90.7"/><rect x="1058.49" y="1015.0" width="2.153" height="95.0"/><rect x="1061.64" y="1014.3" width="2.153" height="95.7"/><rect x="1064.80" y="1020.4" width="2.153" height="89.6"/><rect x="1067.95" y="1015.1" width="2.153" height="94.9"/><rect x="1071.10" y="1020.1" width="2.153" height="89.9"/><rect x="1074.25" y="1016.8" width="2.153" height="93.2"/><rect x="1077.41" y="1024.7" width="2.153" height="85.3"/><rect x="1080.56" y="1027.2" width="2.153" height="82.8"/><rect x="1083.71" y="1031.3" width="2.153" height="78.7"/><rect x="1086.86" y="1031.3" width="2.153" height="78.7"/><rect x="1090.02" y="1044.9" width="2.153" height="65.1"/><rect x="1093.17" y="1044.1" width="2.153" height="65.9"/><rect x="1096.32" y="1044.9" width="2.153" height="65.1"/><rect x="1099.47" y="1054.2" width="2.153" height="55.8"/><rect x="1102.63" y="1062.3" width="2.153" height="47.7"/><rect x="1105.78" y="1070.2" width="2.153" height="39.8"/><rect x="1108.93" y="1068.1" width="2.153" height="41.9"/><rect x="1112.09" y="1075.0" width="2.153" height="35.0"/><rect x="1115.24" y="1077.2" width="2.153" height="32.8"/><rect x="1118.39" y="1080.6" width="2.153" height="29.4"/><rect x="1121.54" y="1092.6" width="2.153" height="17.4"/><rect x="1124.70" y="1092.6" width="2.153" height="17.4"/><rect x="1127.85" y="1097.4" width="2.153" height="12.6"/></g></svg>
</body></html>
